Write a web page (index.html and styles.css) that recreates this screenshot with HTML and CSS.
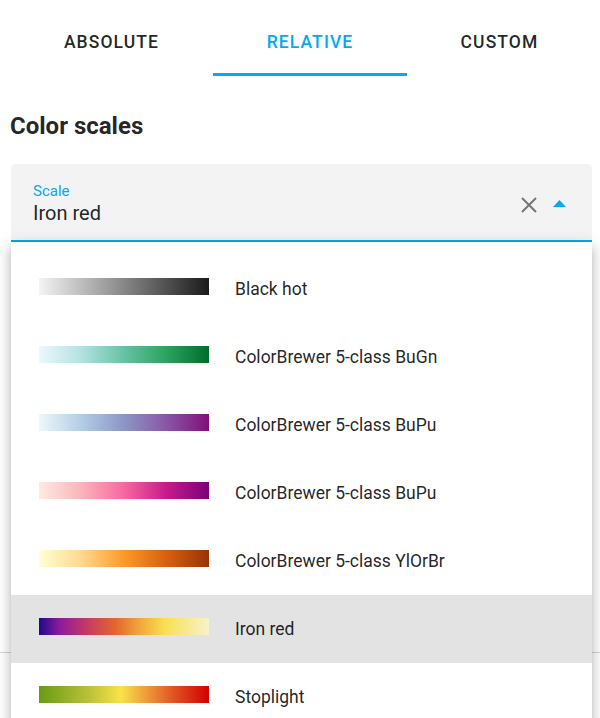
FILE: index.html
```html
<!DOCTYPE html>
<html>
<head>
<meta charset="utf-8">
<link rel="stylesheet" href="styles.css">
</head>
<body>
<div class="page">
  <div class="tabs">
    <div class="tab tab-first">ABSOLUTE</div>
    <div class="tab tab-active">RELATIVE</div>
    <div class="tab tab-last">CUSTOM</div>
  </div>
  <h2 class="heading">Color scales</h2>
  <div class="field-wrap">
    <div class="field">
      <div class="field-text">
        <div class="field-label">Scale</div>
        <div class="field-value">Iron red</div>
      </div>
      <div class="field-icons">
        <svg class="icon-close" width="16" height="16" viewBox="0 0 16 16"><path d="M1 1 L15 15 M15 1 L1 15" stroke="#757575" stroke-width="2" fill="none"/></svg>
        <svg class="icon-arrow" width="13" height="7" viewBox="0 0 13 7"><path d="M0 7 L6.5 0 L13 7 Z" fill="#03a9f4"/></svg>
      </div>
    </div>
    <div class="menu">
      <div class="item"><span class="bar bar-blackhot"></span><span class="label">Black hot</span></div>
      <div class="item"><span class="bar bar-bugn"></span><span class="label">ColorBrewer 5-class BuGn</span></div>
      <div class="item"><span class="bar bar-bupu"></span><span class="label">ColorBrewer 5-class BuPu</span></div>
      <div class="item"><span class="bar bar-rdpu"></span><span class="label">ColorBrewer 5-class BuPu</span></div>
      <div class="item"><span class="bar bar-ylorbr"></span><span class="label">ColorBrewer 5-class YlOrBr</span></div>
      <div class="item item-selected"><span class="bar bar-ironred"></span><span class="label">Iron red</span></div>
      <div class="item"><span class="bar bar-stoplight"></span><span class="label">Stoplight</span></div>
    </div>
  </div>
  <div class="below"></div>
</div>
</body>
</html>
```
FILE: styles.css
```css
html, body {
  margin: 0;
  padding: 0;
  background: #ffffff;
  overflow: hidden;
}
body {
  font-family: Roboto, "Liberation Sans", sans-serif;
  color: rgba(0, 0, 0, 0.87);
  width: 600px;
  height: 718px;
}
.page {
  display: flex;
  flex-direction: column;
}
.tabs {
  display: grid;
  grid-template-columns: 213px 194px 193px;
  height: 76px;
}
.tab {
  display: flex;
  align-items: center;
  justify-content: center;
  font-size: 17.5px;
  font-weight: 500;
  letter-spacing: 1.1px;
  color: rgba(0, 0, 0, 0.87);
  box-sizing: border-box;
  padding-top: 8px;
}
.tab-first { padding-left: 10px; }
.tab-last { padding-right: 8px; }
.tab-active {
  color: #03a9f4;
  border-bottom: 3px solid #03a9f4;
  padding-top: 11px;
}
.heading {
  margin: 38px 0 0 10px;
  font-size: 24px;
  line-height: 24px;
  font-weight: 700;
  color: rgba(0, 0, 0, 0.87);
}
.field-wrap {
  position: relative;
  margin: 26px 8px 0 11px;
}
.field {
  height: 76px;
  background: #f3f3f3;
  border-radius: 5px 5px 0 0;
  border-bottom: 2px solid #03a9f4;
  display: flex;
  align-items: center;
  padding: 0 26px 0 22px;
}
.field-text {
  flex: 1;
  padding-top: 3px;
}
.field-label {
  font-size: 15px;
  line-height: 18px;
  color: #03a9f4;
}
.field-value {
  font-size: 20px;
  line-height: 26px;
  color: rgba(0, 0, 0, 0.87);
}
.field-icons {
  display: flex;
  align-items: center;
  gap: 16px;
  padding-top: 5px;
}
.icon-close { display: block; margin-left: -1px; }
.icon-arrow { display: block; margin-top: -2px; }
.menu {
  position: absolute;
  left: 0;
  right: 0;
  top: 78px;
  background: #ffffff;
  padding-top: 13px;
  box-shadow: 0 5px 5px -3px rgba(0,0,0,0.2), 0 8px 10px 1px rgba(0,0,0,0.14), 0 3px 14px 2px rgba(0,0,0,0.12);
  z-index: 2;
}
.item {
  height: 68px;
  display: flex;
  align-items: center;
  padding-left: 28px;
}
.item-selected {
  background: #e3e3e3;
}
.bar {
  width: 170px;
  height: 17px;
  display: block;
  flex: none;
  margin-bottom: 6px;
}
.label {
  margin-left: 26px;
  font-size: 17.5px;
  color: rgba(0, 0, 0, 0.87);
}
.bar-blackhot { background: linear-gradient(to right, #f4f4f4, #1a1a1a); }
.bar-bugn { background: linear-gradient(to right, #edf8fb, #b2e2e2, #66c2a4, #2ca25f, #006d2c); }
.bar-bupu { background: linear-gradient(to right, #edf8fb, #b3cde3, #8c96c6, #8856a7, #810f7c); }
.bar-rdpu { background: linear-gradient(to right, #feebe2, #fbb4b9, #f768a1, #c51b8a, #7a0177); }
.bar-ylorbr { background: linear-gradient(to right, #ffffd4, #fed98e, #fe9929, #d95f0e, #993404); }
.bar-ironred { background: linear-gradient(to right, #1c0a8c 0%, #8c1a9c 12%, #c43a64 28%, #e4662e 45%, #f2aa3c 60%, #f8e050 74%, #f8f2cc 100%); }
.bar-stoplight { background: linear-gradient(to right, #6a9a14 0%, #bcc23a 30%, #f8e448 48%, #eea23a 62%, #e05020 80%, #d20000 100%); }
.below {
  height: 410px;
  border-bottom: 1px solid #d4d4d4;
}
```
